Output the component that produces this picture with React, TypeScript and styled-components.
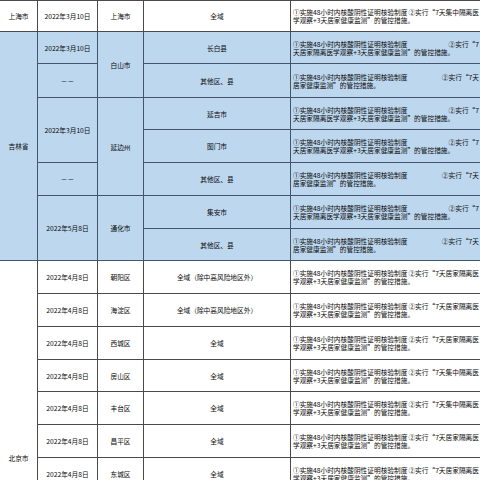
import React from "react";
import styled, { createGlobalStyle } from "styled-components";

const Global = createGlobalStyle`
  html, body { margin: 0; padding: 0; background: #ffffff; }
  body { font-family: "Noto Sans CJK SC", "Noto Sans", sans-serif; overflow: hidden; }
`;

type Tone = "white" | "blue";

const Page = styled.div`
  width: 480px;
  height: 480px;
  overflow: hidden;
`;

const Table = styled.table`
  border-collapse: collapse;
  table-layout: fixed;
  width: 481px;
  margin-left: -1px;
  border-top: 1px solid #3c5485;
`;

const Row = styled.tr<{ $h: number }>`
  height: ${(p) => p.$h}px;
`;

const Cell = styled.td<{ $tone: Tone }>`
  padding: 0 1px;
  font-size: 6.7px;
  line-height: 8px;
  color: #0a0a0a;
  text-align: center;
  vertical-align: middle;
  white-space: nowrap;
  overflow: hidden;
  background: ${(p) => (p.$tone === "blue" ? "#bdd7ee" : "#ffffff")};
  border: 1px solid ${(p) => (p.$tone === "blue" ? "#44546a" : "#4a4a4a")};
`;

const MeasureCell = styled(Cell)`
  text-align: left;
  padding: 0 1px 0 2px;
`;

const FirstLine = styled.div`
  display: flex;
  justify-content: space-between;
`;

const SecondLine = styled.div`
  text-align: left;
`;

type MeasureProps = { tone: Tone; right: string; rest: string };

const Measure = ({ tone, right, rest }: MeasureProps) => (
  <MeasureCell $tone={tone}>
    <FirstLine>
      <span>①实施48小时内核酸阴性证明核验制度</span>
      <span>{right}</span>
    </FirstLine>
    <SecondLine>{rest}</SecondLine>
  </MeasureCell>
);

const A = { right: "②实行“7", rest: "天居家隔离医学观察+3天居家健康监测”的管控措施。" };
const B = { right: "②实行“7天", rest: "居家健康监测”的管控措施。" };
const homeR = { right: "②实行“7天居家隔离医", rest: "学观察+3天居家健康监测”的管控措施。" };
const focusR = { right: "②实行“7天集中隔离医", rest: "学观察+3天居家健康监测”的管控措施。" };

const beijing: { d: string; area: string; m: { right: string; rest: string } }[] = [
  { d: "朝阳区", area: "全域（除中高风险地区外）", m: homeR },
  { d: "海淀区", area: "全域（除中高风险地区外）", m: homeR },
  { d: "西城区", area: "全域", m: homeR },
  { d: "房山区", area: "全域", m: focusR },
  { d: "丰台区", area: "全域", m: focusR },
  { d: "昌平区", area: "全域", m: homeR },
  { d: "东城区", area: "全域", m: homeR },
  { d: "石景山区", area: "全域", m: homeR },
  { d: "通州区", area: "全域", m: homeR },
  { d: "顺义区", area: "全域", m: homeR },
  { d: "大兴区", area: "全域", m: homeR },
  { d: "门头沟区", area: "全域", m: homeR },
];
const bjHeights = [33, 33, 33, 32, 33, 33, 33, 33, 33, 33, 33, 33];

export default function App() {
  const b: Tone = "blue";
  const w: Tone = "white";
  return (
    <Page>
      <Global />
      <Table>
        <colgroup>
          <col style={{ width: 38 }} />
          <col style={{ width: 60 }} />
          <col style={{ width: 46 }} />
          <col style={{ width: 147 }} />
          <col style={{ width: 190 }} />
        </colgroup>
        <tbody>
          <Row $h={31}>
            <Cell $tone={w}>上海市</Cell>
            <Cell $tone={w}>2022年3月10日</Cell>
            <Cell $tone={w}>上海市</Cell>
            <Cell $tone={w}>全域</Cell>
            <Measure tone={w} {...focusR} />
          </Row>

          <Row $h={32}>
            <Cell $tone={b} rowSpan={7}>吉林省</Cell>
            <Cell $tone={b}>2022年3月10日</Cell>
            <Cell $tone={b} rowSpan={2}>白山市</Cell>
            <Cell $tone={b}>长白县</Cell>
            <Measure tone={b} {...A} />
          </Row>
          <Row $h={34}>
            <Cell $tone={b}>－－</Cell>
            <Cell $tone={b}>其他区、县</Cell>
            <Measure tone={b} {...B} />
          </Row>
          <Row $h={32}>
            <Cell $tone={b} rowSpan={2}>2022年3月10日</Cell>
            <Cell $tone={b} rowSpan={3}>延边州</Cell>
            <Cell $tone={b}>延吉市</Cell>
            <Measure tone={b} {...A} />
          </Row>
          <Row $h={33}>
            <Cell $tone={b}>图门市</Cell>
            <Measure tone={b} {...A} />
          </Row>
          <Row $h={33}>
            <Cell $tone={b}>－－</Cell>
            <Cell $tone={b}>其他区、县</Cell>
            <Measure tone={b} {...B} />
          </Row>
          <Row $h={33}>
            <Cell $tone={b} rowSpan={2}>2022年5月8日</Cell>
            <Cell $tone={b} rowSpan={2}>通化市</Cell>
            <Cell $tone={b}>集安市</Cell>
            <Measure tone={b} {...A} />
          </Row>
          <Row $h={32}>
            <Cell $tone={b}>其他区、县</Cell>
            <Measure tone={b} {...B} />
          </Row>

          {beijing.map((r, i) => (
            <Row $h={bjHeights[i]} key={r.d}>
              {i === 0 && (
                <Cell $tone={w} rowSpan={beijing.length}>
                  北京市
                </Cell>
              )}
              <Cell $tone={w}>2022年4月8日</Cell>
              <Cell $tone={w}>{r.d}</Cell>
              <Cell $tone={w}>{r.area}</Cell>
              <Measure tone={w} {...r.m} />
            </Row>
          ))}
        </tbody>
      </Table>
    </Page>
  );
}
